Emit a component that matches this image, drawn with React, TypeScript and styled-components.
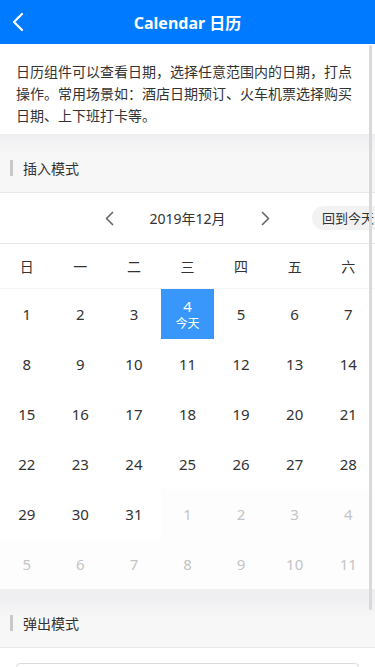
import styled, { createGlobalStyle } from 'styled-components';

const GlobalStyle = createGlobalStyle`
  html, body {
    margin: 0;
    padding: 0;
    overflow: hidden;
  }
  body {
    font-family: "Noto Sans", "Noto Sans CJK SC", sans-serif;
    color: #333;
    background: #fff;
  }
`;

const Page = styled.div`
  position: relative;
  width: 375px;
  height: 667px;
  overflow: hidden;
  display: flex;
  flex-direction: column;
`;

const NavBar = styled.header`
  height: 44px;
  flex-shrink: 0;
  background: #007aff;
  display: flex;
  align-items: center;
  justify-content: center;
  position: relative;
`;

const BackButton = styled.div`
  position: absolute;
  left: 12px;
  top: 12px;
  width: 16px;
  height: 20px;
  display: flex;
  align-items: center;
`;

const Title = styled.h1`
  margin: 0;
  font-size: 16px;
  font-weight: bold;
  color: #fff;
`;

const Content = styled.main`
  flex: 1;
  overflow: hidden;
`;

const Desc = styled.p`
  margin: 0;
  padding: 17px 16px 7px;
  font-size: 14px;
  line-height: 22px;
  color: #333;
  background: #fff;
`;

const SectionTitle = styled.div<{ $tall?: boolean }>`
  height: ${p => (p.$tall ? 59 : 50)}px;
  padding-top: ${p => (p.$tall ? 10 : 0)}px;
  box-sizing: border-box;
  display: flex;
  align-items: center;
  padding-left: 10px;
  font-size: 14px;
  color: #333;
  background: linear-gradient(#efeff1, #f7f7f8 20px);
  border-bottom: 1px solid #eaeaea;
  gap: 10px;

  &::before {
    content: '';
    width: 3px;
    height: 16px;
    background: #c8c8c8;
  }
`;

const MonthBar = styled.div`
  position: relative;
  height: 50px;
  display: flex;
  align-items: center;
  justify-content: center;
  gap: 32px;
  border-bottom: 1px solid #e6e6e6;
  font-size: 14px;
  color: #333;
`;

const Arrow = styled.div`
  width: 12px;
  height: 16px;
  display: flex;
  align-items: center;
  justify-content: center;
`;

const MonthLabel = styled.span`
  width: 80px;
  text-align: center;
`;

const TodayButton = styled.div`
  position: absolute;
  left: 312px;
  top: 13px;
  height: 24px;
  padding: 0 20px 0 10px;
  border-radius: 12px 0 0 12px;
  background: #f2f2f2;
  font-size: 13px;
  line-height: 24px;
  white-space: nowrap;
  color: #333;
`;

const Grid = styled.div`
  display: grid;
  grid-template-columns: repeat(7, 1fr);
`;

const WeekCell = styled.div`
  height: 44px;
  display: flex;
  align-items: center;
  justify-content: center;
  font-size: 14px;
  color: #333;
  border-bottom: 1px solid #f6f6f6;
`;

const DayCell = styled.div<{ $muted?: boolean; $active?: boolean }>`
  height: 50px;
  display: flex;
  flex-direction: column;
  align-items: center;
  justify-content: center;
  font-size: 15px;
  color: ${p => (p.$active ? '#fff' : p.$muted ? '#c4c4c4' : '#333')};
  background: ${p => (p.$active ? '#3996fb' : p.$muted ? '#fdfdfd' : '#fff')};
`;

const TodayTag = styled.span`
  font-size: 12px;
  line-height: 16px;
`;

const Gap = styled.div`
  height: 9px;
  background: #efeff1;
`;

const InputBox = styled.div`
  margin: 15px 16px 0;
  height: 40px;
  border: 1px solid #dcdcdc;
  border-radius: 4px;
`;

const ScrollThumb = styled.div`
  position: absolute;
  right: 3px;
  top: 45px;
  width: 3px;
  height: 565px;
  background: #d9d9d9;
  border-radius: 2px;
`;

const weekDays = ['日', '一', '二', '三', '四', '五', '六'];

const buildDays = () => {
  const days: { day: number; muted: boolean }[] = [];
  for (let d = 1; d <= 31; d++) days.push({ day: d, muted: false });
  for (let d = 1; d <= 11; d++) days.push({ day: d, muted: true });
  return days;
};

const Chevron = ({ dir, color, size }: { dir: 'left' | 'right'; color: string; size: number }) => (
  <svg width={size * 0.6} height={size} viewBox="0 0 12 20" fill="none">
    <path
      d={dir === 'left' ? 'M10 2 L2 10 L10 18' : 'M2 2 L10 10 L2 18'}
      stroke={color}
      strokeWidth="2.2"
      strokeLinecap="round"
      strokeLinejoin="round"
    />
  </svg>
);

const App = () => {
  const days = buildDays();
  return (
    <Page>
      <GlobalStyle />
      <NavBar>
        <BackButton>
          <Chevron dir="left" color="#fff" size={20} />
        </BackButton>
        <Title>Calendar 日历</Title>
      </NavBar>
      <Content>
        <Desc>
          日历组件可以查看日期，选择任意范围内的日期，打点操作。常用场景如：酒店日期预订、火车机票选择购买日期、上下班打卡等。
        </Desc>
        <SectionTitle $tall>插入模式</SectionTitle>
        <MonthBar>
          <Arrow>
            <Chevron dir="left" color="#666" size={15} />
          </Arrow>
          <MonthLabel>2019年12月</MonthLabel>
          <Arrow>
            <Chevron dir="right" color="#666" size={15} />
          </Arrow>
          <TodayButton>回到今天</TodayButton>
        </MonthBar>
        <Grid>
          {weekDays.map(w => (
            <WeekCell key={w}>{w}</WeekCell>
          ))}
          {days.map((d, i) => {
            const active = !d.muted && d.day === 4;
            return (
              <DayCell key={i} $muted={d.muted} $active={active}>
                {d.day}
                {active && <TodayTag>今天</TodayTag>}
              </DayCell>
            );
          })}
        </Grid>
        <Gap />
        <SectionTitle>弹出模式</SectionTitle>
        <InputBox />
      </Content>
      <ScrollThumb />
    </Page>
  );
};

export default App;
